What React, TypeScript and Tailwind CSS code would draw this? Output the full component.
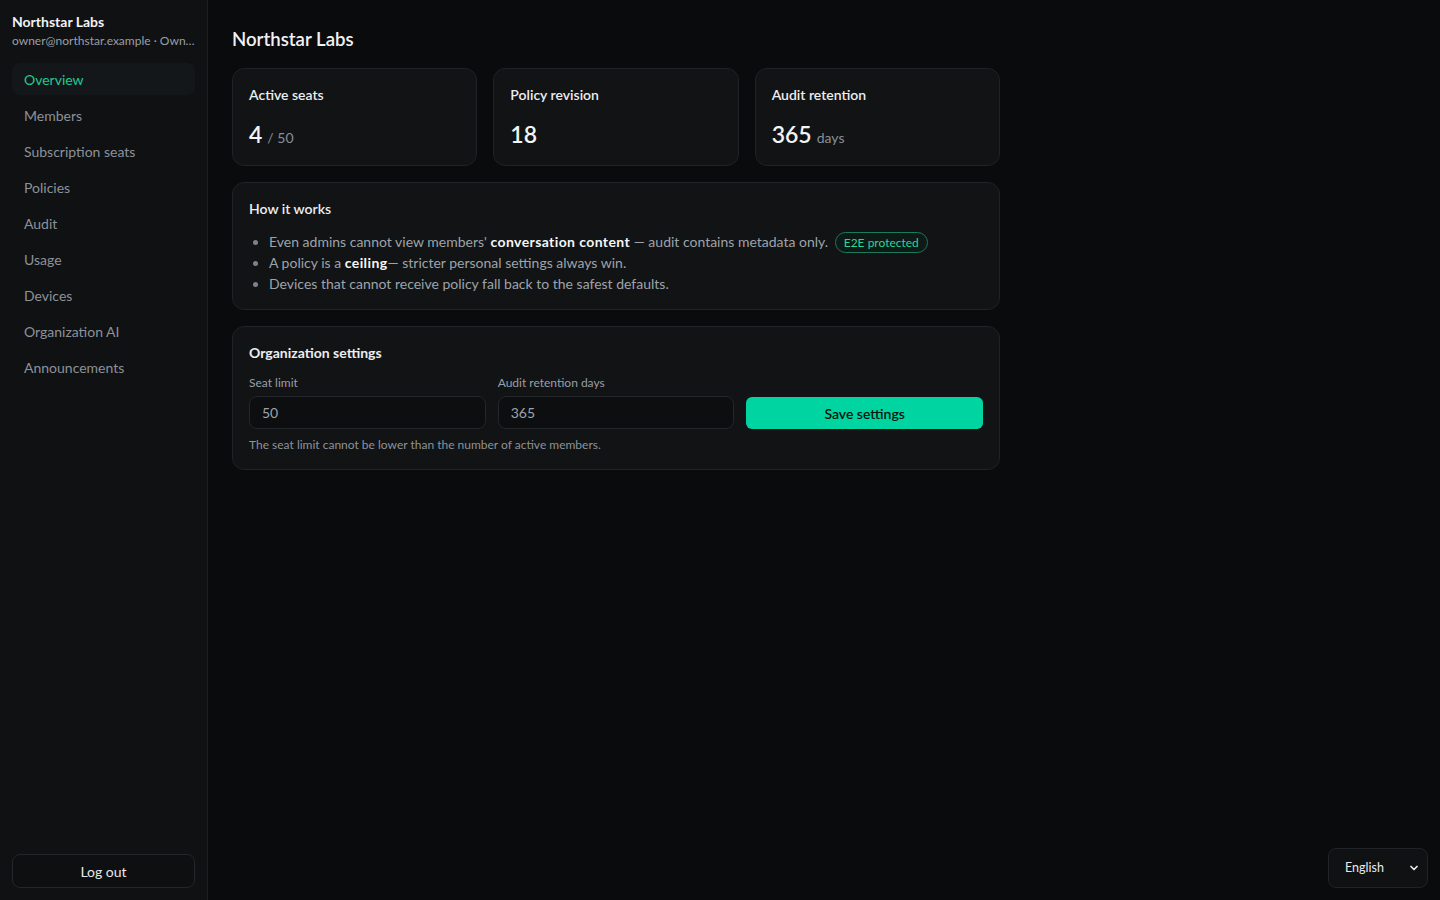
import React from "react";

const nav = [
  "Overview",
  "Members",
  "Subscription seats",
  "Policies",
  "Audit",
  "Usage",
  "Devices",
  "Organization AI",
  "Announcements",
];

function StatCard({ label, value, suffix }: { label: string; value: string; suffix?: string }) {
  return (
    <div className="rounded-xl border border-[#1f2226] bg-[#111315] px-4 pt-[16px] pb-4 h-[98px]">
      <div className="text-[14px] font-semibold text-[#eceef0] leading-5">{label}</div>
      <div className="mt-[15px] flex items-baseline gap-[5px]">
        <span className="text-[23px] font-semibold text-[#f3f4f6] leading-7">{value}</span>
        {suffix && <span className="text-[14px] text-[#8a8f96]">{suffix}</span>}
      </div>
    </div>
  );
}

export default function App() {
  return (
    <div
      className="flex min-h-[900px] h-[900px] bg-[#0a0b0d] text-[#e5e7eb]"
      style={{ fontFamily: "Lato, 'Noto Sans', sans-serif" }}
    >
      <aside className="w-[208px] shrink-0 border-r border-[#1b1e22] bg-[#0f1113] flex flex-col px-3 pt-[13px] pb-3">
        <div className="text-[14px] font-bold text-[#f1f2f4] leading-[18px]">Northstar Labs</div>
        <div className="text-[12px] text-[#9a9fa6] leading-4 mt-[2px] truncate">owner@northstar.example · Owner</div>
        <nav className="mt-[14px] flex flex-col gap-1">
          {nav.map((n, i) => (
            <div
              key={n}
              className={
                i === 0
                  ? "h-8 rounded-lg bg-[#14171a] px-3 flex items-center text-[14px] text-[#22c98f]"
                  : "h-8 rounded-lg px-3 flex items-center text-[14px] text-[#8d9299]"
              }
            >
              {n}
            </div>
          ))}
        </nav>
        <div className="flex-1" />
        <button className="h-[34px] w-full rounded-lg border border-[#23262a] bg-[#0d0f11] text-[14px] text-[#e8eaed]">
          Log out
        </button>
      </aside>

      <main className="flex-1 pl-6 pt-[27px]">
        <div className="w-[768px]">
          <h1 className="text-[18.6px] font-semibold text-[#f1f2f4] leading-6">Northstar Labs</h1>
          <div className="mt-[17px] grid grid-cols-3 gap-4">
            <StatCard label="Active seats" value="4" suffix="/ 50" />
            <StatCard label="Policy revision" value="18" />
            <StatCard label="Audit retention" value="365" suffix="days" />
          </div>

          <div className="mt-4 rounded-xl border border-[#1f2226] bg-[#111315] px-4 pt-[16px] pb-[15px]">
            <div className="text-[14px] font-semibold text-[#eceef0] leading-5">How it works</div>
            <ul className="mt-[13px] pl-5 list-disc text-[14px] leading-[20.5px] text-[#9ea3aa] marker:text-[#7d828a]">
              <li>
                Even admins cannot view members'{" "}
                <b className="font-bold tracking-[0.4px] text-[#f5f6f7]">conversation content</b> — audit contains
                metadata only.{" "}
                <span className="ml-[3px] inline-block rounded-full border border-[#1b7a5a] bg-[#0d1a15] px-2 text-[12px] leading-[19px] text-[#2bd49a]">
                  E2E protected
                </span>
              </li>
              <li>
                A policy is a <b className="font-bold tracking-[0.4px] text-[#f5f6f7]">ceiling</b>— stricter personal
                settings always win.
              </li>
              <li>Devices that cannot receive policy fall back to the safest defaults.</li>
            </ul>
          </div>

          <div className="mt-4 rounded-xl border border-[#1f2226] bg-[#111315] px-4 pt-[16px] pb-[16px]">
            <div className="text-[14px] font-bold text-[#eceef0] leading-5">Organization settings</div>
            <div className="mt-[12px] grid grid-cols-3 gap-3 items-end">
              <div>
                <div className="text-[12px] text-[#9a9fa6] leading-4 mb-[5px]">Seat limit</div>
                <div className="h-[33px] rounded-lg border border-[#23262a] bg-[#0c0e10] px-3 flex items-center text-[14px] text-[#9ea3aa]">
                  50
                </div>
              </div>
              <div>
                <div className="text-[12px] text-[#9a9fa6] leading-4 mb-[5px]">Audit retention days</div>
                <div className="h-[33px] rounded-lg border border-[#23262a] bg-[#0c0e10] px-3 flex items-center text-[14px] text-[#9ea3aa]">
                  365
                </div>
              </div>
              <button className="h-[32px] rounded-md bg-[#00d5a2] text-[14px] font-semibold text-[#04140e]">
                Save settings
              </button>
            </div>
            <div className="mt-[8px] text-[12px] text-[#8d9299] leading-4">
              The seat limit cannot be lower than the number of active members.
            </div>
          </div>
        </div>
      </main>

      <div className="fixed right-[12px] bottom-[12px] h-[40px] w-[100px] rounded-lg border border-[#202327] bg-[#0f1113] flex items-center justify-between pl-4 pr-[7px] text-[12.5px] text-[#e8eaed]">
        <span>English</span>
        <svg width="12" height="12" viewBox="0 0 24 24" fill="none" stroke="#e8eaed" strokeWidth="3.5" strokeLinecap="round" strokeLinejoin="round">
          <path d="M6 9l6 6 6-6" />
        </svg>
      </div>
    </div>
  );
}
